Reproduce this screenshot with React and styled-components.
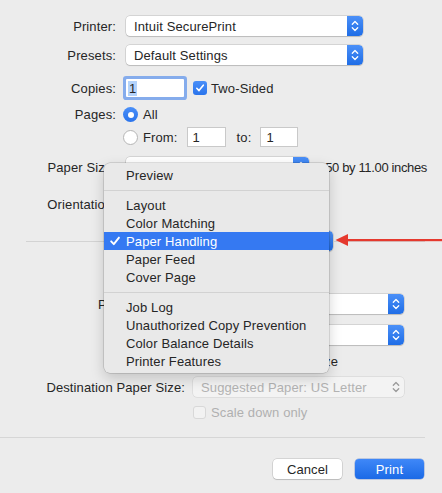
import React from 'react'
import styled, { createGlobalStyle, css } from 'styled-components'

const GlobalStyle = createGlobalStyle`
  html, body {
    margin: 0;
    background: #ececec;
  }
  body {
    font-family: "Liberation Sans", Arial, sans-serif;
    font-size: 13px;
    letter-spacing: 0.12px;
    color: #262626;
  }
`

const Dialog = styled.div`
  position: relative;
  width: 442px;
  height: 493px;
  overflow: hidden;
  padding-top: 16px;
  box-sizing: border-box;
  background: #ececec;
`

const Row = styled.div`
  display: flex;
  align-items: center;
  height: ${({ $h }) => $h || 20}px;
  margin-top: ${({ $mt }) => $mt || 0}px;
`

const Label = styled.div`
  flex: 0 0 ${({ $w }) => $w || 116}px;
  margin-right: ${({ $gap }) => $gap || 7}px;
  text-align: right;
  white-space: nowrap;
`

const Text = styled.span`
  white-space: nowrap;
  margin-left: ${({ $ml }) => $ml || 0}px;
  color: ${({ $muted }) => ($muted ? '#b0b0b0' : 'inherit')};
`

const SizeNote = styled.span`
  white-space: nowrap;
  margin-left: 6px;
  letter-spacing: -0.35px;
`

const PopupBox = styled.div`
  display: flex;
  align-items: center;
  flex-shrink: 0;
  width: ${({ $w }) => $w}px;
  height: 20px;
  margin-left: ${({ $ml }) => $ml || 0}px;
  background: ${({ $disabled }) => ($disabled ? '#f3f3f3' : '#fff')};
  border-radius: 4px;
  box-shadow: ${({ $disabled }) =>
    $disabled
      ? '0 0 0 0.5px rgba(0,0,0,.12)'
      : '0 0 0 0.5px rgba(0,0,0,.2), 0 1px 1px rgba(0,0,0,.12)'};
  overflow: hidden;
`

const PopupText = styled.span`
  flex: 1;
  padding-left: 8px;
  white-space: nowrap;
  overflow: hidden;
  color: ${({ $disabled }) => ($disabled ? '#b2b2b2' : '#262626')};
`

const Stepper = styled.span`
  display: flex;
  align-items: center;
  justify-content: center;
  width: 16px;
  height: 100%;
  border-radius: 0 4px 4px 0;
  ${({ $disabled }) =>
    !$disabled &&
    css`
      background: linear-gradient(#4b90f8, #1f6de6);
    `}
`

const Chevrons = ({ color }) => (
  <svg width="8" height="14" viewBox="0 0 8 14">
    <path d="M1.3 5.2 L4 2.5 L6.7 5.2 M1.3 8.8 L4 11.5 L6.7 8.8" fill="none" stroke={color} strokeWidth="1.3" strokeLinecap="round" strokeLinejoin="round" />
  </svg>
)

const Popup = ({ w, ml, disabled, children }) => (
  <PopupBox $w={w} $ml={ml} $disabled={disabled}>
    <PopupText $disabled={disabled}>{children}</PopupText>
    <Stepper $disabled={disabled}>
      <Chevrons color={disabled ? '#9a9a9a' : '#fff'} />
    </Stepper>
  </PopupBox>
)

const CopiesField = styled.div`
  width: 58px;
  height: 18px;
  margin-left: 3px;
  background: #fff;
  box-shadow: 0 0 0 3px #85acec;
  border-radius: 1px;
  display: flex;
  align-items: center;
  padding-left: 2px;
  box-sizing: border-box;
`

const Selected = styled.span`
  background: #b4d3fb;
  padding: 0 1px;
`

const Field = styled.div`
  width: ${({ $w }) => $w}px;
  height: 20px;
  margin-left: ${({ $ml }) => $ml || 0}px;
  background: #fff;
  border: 1px solid #c9c9c9;
  box-sizing: border-box;
  padding-left: 5px;
  display: flex;
  align-items: center;
`

const Check = styled.span`
  display: inline-flex;
  align-items: center;
  justify-content: center;
  flex-shrink: 0;
  width: ${({ $size }) => $size || 14}px;
  height: ${({ $size }) => $size || 14}px;
  margin-left: ${({ $ml }) => $ml || 0}px;
  border-radius: 3px;
  box-sizing: border-box;
  ${({ $on, $disabled }) =>
    $on
      ? css`
          background: linear-gradient(#4a8ff8, #2a74ec);
        `
      : css`
          background: ${$disabled ? '#f2f2f2' : '#fff'};
          border: 1px solid ${$disabled ? '#d8d8d8' : '#b8b8b8'};
        `}
`

const Radio = styled.span`
  display: inline-flex;
  align-items: center;
  justify-content: center;
  width: 15px;
  height: 15px;
  border-radius: 50%;
  box-sizing: border-box;
  ${({ $on }) =>
    $on
      ? css`
          background: linear-gradient(#4a8ff8, #2a74ec);
          &::after {
            content: '';
            width: 6px;
            height: 6px;
            border-radius: 50%;
            background: #fff;
          }
        `
      : css`
          background: #fff;
          border: 1px solid #b5b5b5;
        `}
`

const Tick = ({ color = '#fff', size = 10 }) => (
  <svg width={size} height={size} viewBox="0 0 10 10">
    <path d="M1.8 5.3 L4 7.6 L8.3 2.2" fill="none" stroke={color} strokeWidth="1.6" strokeLinecap="round" strokeLinejoin="round" />
  </svg>
)

const OrientIcon = styled.span`
  display: inline-block;
  width: ${({ $land }) => ($land ? 26 : 20)}px;
  height: ${({ $land }) => ($land ? 20 : 26)}px;
  margin-right: 10px;
  background: #fff;
  border: 1px solid #aaa;
`

const PaneRow = styled.div`
  display: flex;
  align-items: center;
  height: 20px;
  margin-top: ${({ $mt }) => $mt}px;
  padding: 0 17px 0 26px;
`

const Rule = styled.div`
  flex: 1;
  height: 1px;
  background: #d3d3d3;
`

const BottomRule = styled.div`
  width: 425px;
  height: 1px;
  margin-top: ${({ $mt }) => $mt}px;
  background: #d6d6d6;
`

const Buttons = styled.div`
  display: flex;
  justify-content: flex-end;
  gap: 13px;
  margin-top: ${({ $mt }) => $mt}px;
  padding-right: 18px;
`

const Button = styled.button`
  width: 69px;
  height: 20px;
  padding: 0;
  border: none;
  border-radius: 4px;
  font: inherit;
  letter-spacing: inherit;
  ${({ $primary }) =>
    $primary
      ? css`
          color: #fff;
          background: linear-gradient(#3f88f8, #1b6ae6);
          box-shadow: 0 0 0 0.5px rgba(0, 60, 180, 0.4);
        `
      : css`
          color: #262626;
          background: #fff;
          box-shadow: 0 0 0 0.5px rgba(0, 0, 0, 0.2), 0 1px 1px rgba(0, 0, 0, 0.12);
        `}
`

const Menu = styled.div`
  position: absolute;
  left: 104px;
  top: 163px;
  width: 225px;
  padding: 3px 0;
  background: #e9e9e9;
  border-radius: 6px;
  box-shadow: 0 0 0 0.5px rgba(0, 0, 0, 0.22), 0 5px 14px rgba(0, 0, 0, 0.18);
  z-index: 2;
`

const MenuItem = styled.div`
  position: relative;
  height: 18px;
  display: flex;
  align-items: center;
  padding-left: 22px;
  white-space: nowrap;
  ${({ $active }) =>
    $active &&
    css`
      background: #3579f2;
      color: #fff;
    `}
`

const MenuCheck = styled.span`
  position: absolute;
  left: 5px;
  top: 3px;
  display: flex;
`

const MenuSep = styled.div`
  height: 1px;
  margin: 6px 0 5px;
  background: #d2d2d2;
`

const Arrow = styled.svg`
  position: absolute;
  left: 334px;
  top: 233px;
  z-index: 3;
`

const MENU = [
  ['Preview'],
  null,
  ['Layout'],
  ['Color Matching'],
  ['Paper Handling', true],
  ['Paper Feed'],
  ['Cover Page'],
  null,
  ['Job Log'],
  ['Unauthorized Copy Prevention'],
  ['Color Balance Details'],
  ['Printer Features']
]

export default function App() {
  return (
    <Dialog>
      <GlobalStyle />

      <Row $h={20}>
        <Label>Printer:</Label>
        <Popup w={237} ml={3}>Intuit SecurePrint</Popup>
      </Row>
      <Row $h={20} $mt={9}>
        <Label>Presets:</Label>
        <Popup w={237} ml={3}>Default Settings</Popup>
      </Row>
      <Row $h={24} $mt={11}>
        <Label>Copies:</Label>
        <CopiesField>
          <Selected>1</Selected>
        </CopiesField>
        <Check $on $ml={9}>
          <Tick />
        </Check>
        <Text $ml={4}>Two-Sided</Text>
      </Row>
      <Row $h={17} $mt={6}>
        <Label>Pages:</Label>
        <Radio $on />
        <Text $ml={5}>All</Text>
      </Row>
      <Row $h={20} $mt={4}>
        <Label />
        <Radio />
        <Text $ml={5}>From:</Text>
        <Field $w={39} $ml={9}>1</Field>
        <Text $ml={11}>to:</Text>
        <Field $w={38} $ml={9}>1</Field>
      </Row>
      <Row $h={20} $mt={10}>
        <Label>Paper Size:</Label>
        <Popup w={183} ml={3}>US Letter</Popup>
        <SizeNote>8.50 by 11.00 inches</SizeNote>
      </Row>
      <Row $h={30} $mt={12}>
        <Label>Orientation:</Label>
        <OrientIcon />
        <OrientIcon $land />
      </Row>

      <PaneRow $mt={12}>
        <Rule />
        <Popup w={215}>Paper Handling</Popup>
        <Rule />
      </PaneRow>

      <Row $h={20} $mt={43}>
        <Label $w={185} $gap={8}>Pages to Print:</Label>
        <Popup w={211}>All pages</Popup>
      </Row>
      <Row $h={20} $mt={11}>
        <Label $w={185} $gap={8}>Page Order:</Label>
        <Popup w={211}>Automatic</Popup>
      </Row>
      <Row $h={14} $mt={9}>
        <Label $w={185} $gap={8} />
        <Check $size={13} />
        <Text $ml={5}>Scale to fit paper size</Text>
      </Row>
      <Row $h={20} $mt={9}>
        <Label $w={185} $gap={8}>Destination Paper Size:</Label>
        <Popup w={211} disabled>Suggested Paper: US Letter</Popup>
      </Row>
      <Row $h={14} $mt={8}>
        <Label $w={185} $gap={8} />
        <Check $size={13} $disabled />
        <Text $ml={5} $muted>Scale down only</Text>
      </Row>

      <BottomRule $mt={18} />
      <Buttons $mt={21}>
        <Button>Cancel</Button>
        <Button $primary>Print</Button>
      </Buttons>

      <Menu>
        {MENU.map((item, i) =>
          item ? (
            <MenuItem key={i} $active={item[1]}>
              {item[1] && (
                <MenuCheck>
                  <Tick size={12} />
                </MenuCheck>
              )}
              {item[0]}
            </MenuItem>
          ) : (
            <MenuSep key={i} />
          )
        )}
      </Menu>

      <Arrow width="108" height="14" viewBox="0 0 108 14">
        <polygon points="1.5,7 14,1 14,13" fill="#e5392e" />
        <rect x="12" y="6" width="96" height="2.2" fill="#e5392e" />
      </Arrow>
    </Dialog>
  )
}
